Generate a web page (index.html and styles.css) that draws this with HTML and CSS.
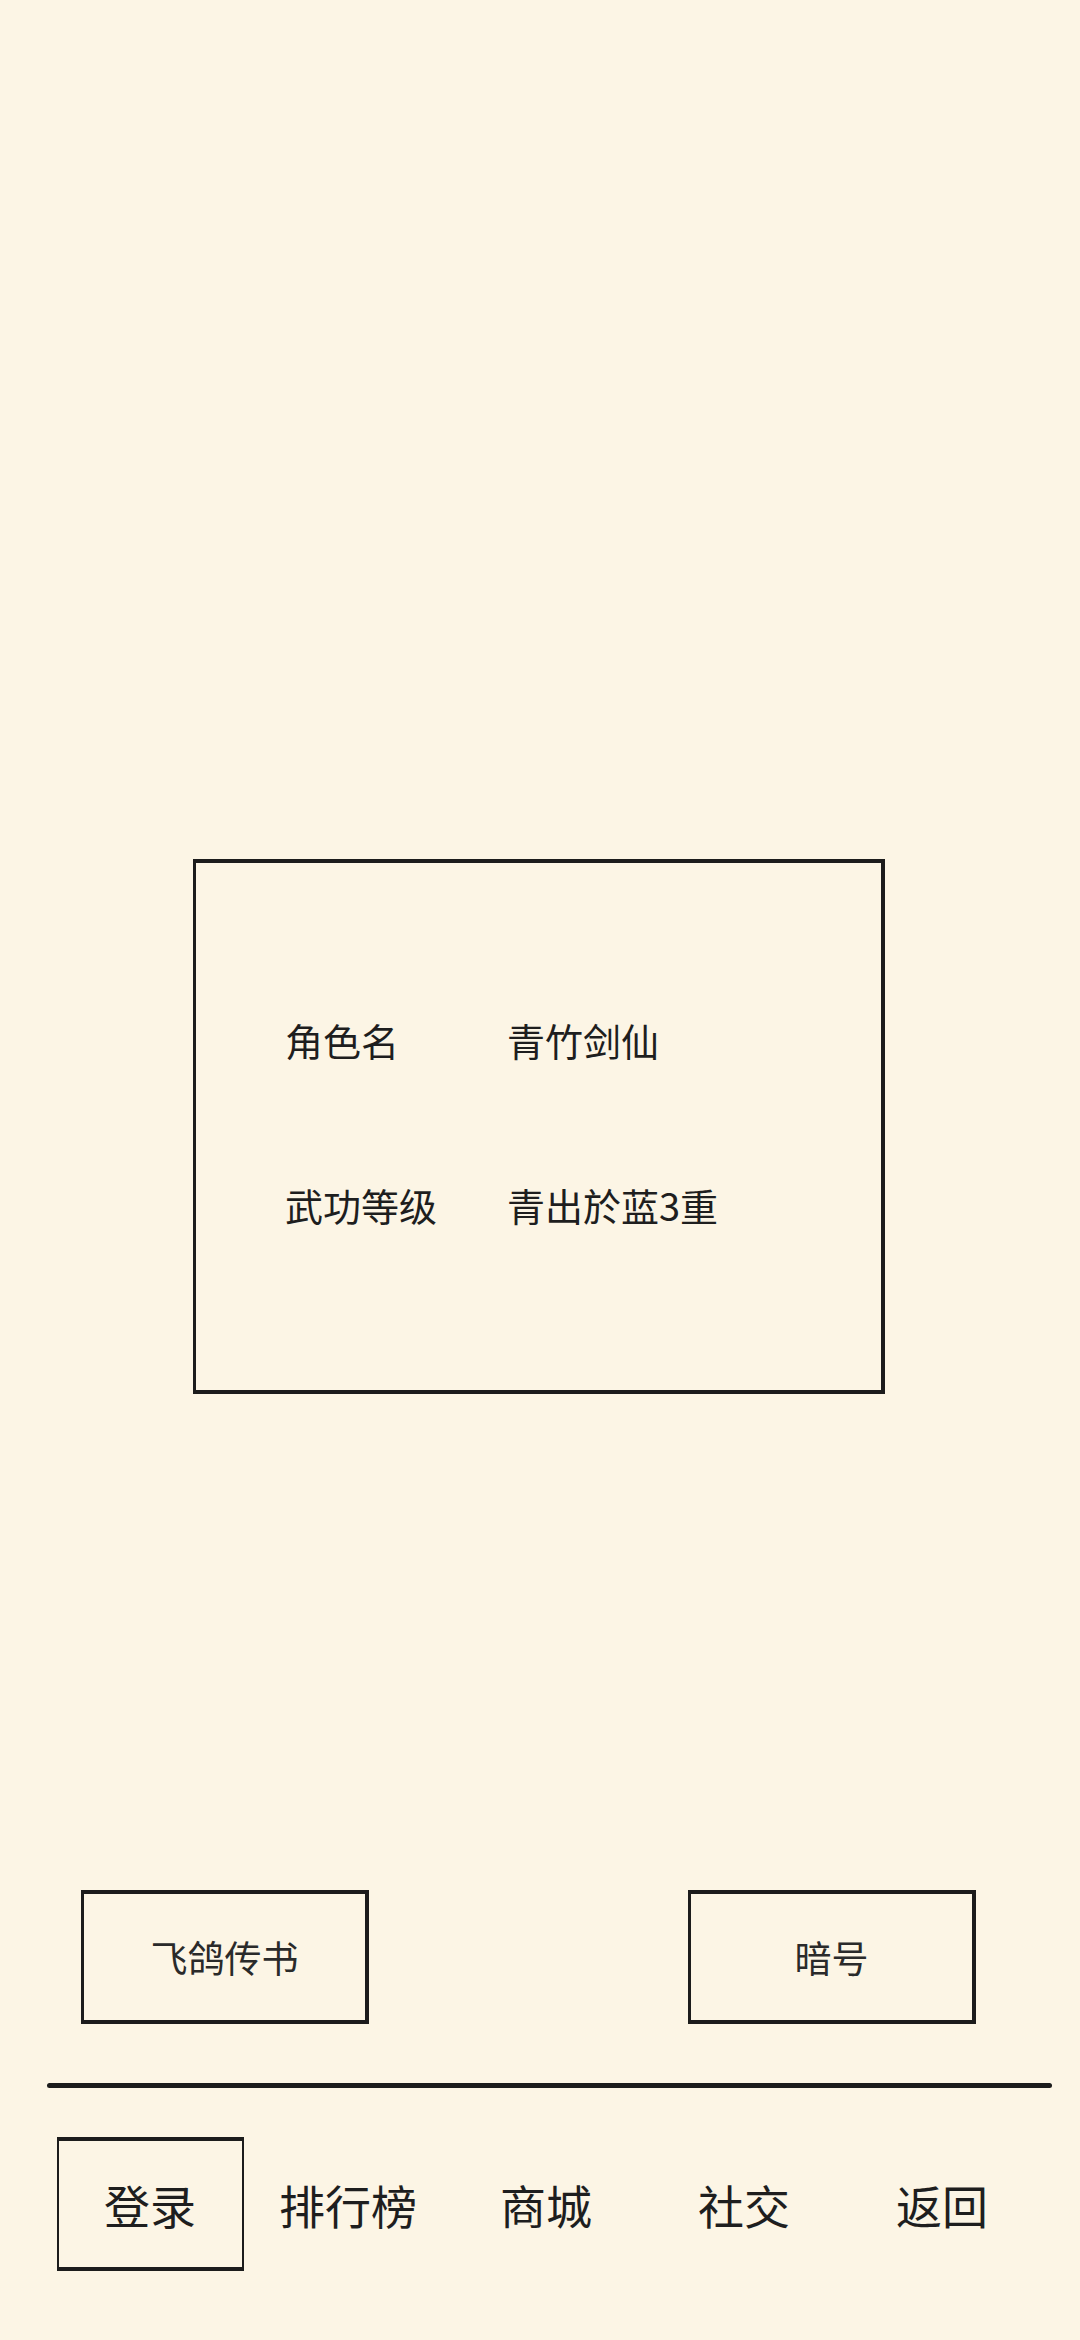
FILE: index.html
```html
<!DOCTYPE html>
<html lang="zh-CN">
<head>
<meta charset="utf-8">
<title>角色信息</title>
<link rel="stylesheet" href="styles.css">
</head>
<body>
<div class="page">
  <section class="card">
    <div class="info">
      <span class="label">角色名</span><span class="value">青竹剑仙</span>
      <span class="label">武功等级</span><span class="value">青出於蓝3重</span>
    </div>
  </section>

  <div class="actions">
    <div class="btn">飞鸽传书</div>
    <div class="btn">暗号</div>
  </div>

  <div class="rule"></div>

  <nav class="nav">
    <div class="nav-item active">登录</div>
    <div class="nav-item">排行榜</div>
    <div class="nav-item">商城</div>
    <div class="nav-item">社交</div>
    <div class="nav-item">返回</div>
  </nav>
</div>
</body>
</html>
```

FILE: styles.css
```css
html, body {
  margin: 0;
  padding: 0;
  background: #fcf5e5;
}

body {
  width: 1080px;
  height: 2340px;
  overflow: hidden;
  font-family: "Noto Sans CJK SC", "Noto Sans", sans-serif;
  color: #1e1e1e;
}

.page {
  display: flex;
  flex-direction: column;
  width: 1080px;
  height: 2340px;
}

.card {
  box-sizing: border-box;
  margin: 859px 0 0 193px;
  width: 692px;
  height: 535px;
  border-style: solid;
  border-color: #1c1c1c;
  border-width: 4px 4px 4px 3px;
  padding: 152px 0 0 89px;
}

.info {
  display: grid;
  grid-template-columns: 222px auto;
  row-gap: 115px;
  font-size: 38px;
  line-height: 50px;
}

.actions {
  display: flex;
  gap: 319px;
  margin: 496px 0 0 81px;
}

.btn {
  box-sizing: border-box;
  width: 288px;
  height: 134px;
  border-style: solid;
  border-color: #1c1c1c;
  border-width: 4px 4px 4px 3px;
  display: flex;
  align-items: center;
  justify-content: center;
  font-size: 37px;
  color: #2a2a2a;
}

.rule {
  margin: 59px 0 0 47px;
  width: 1005px;
  height: 5px;
  border-radius: 3px;
  background: #1c1c1c;
}

.nav {
  display: grid;
  grid-template-columns: repeat(5, 198px);
  margin: 49px 0 0 51px;
}

.nav-item {
  box-sizing: border-box;
  justify-self: center;
  width: 187px;
  height: 134px;
  display: flex;
  align-items: center;
  justify-content: center;
  font-size: 46px;
  color: #1e1e1e;
}

.nav-item.active {
  border-style: solid;
  border-color: #1c1c1c;
  border-width: 4px 2px 4px 2px;
}
```
